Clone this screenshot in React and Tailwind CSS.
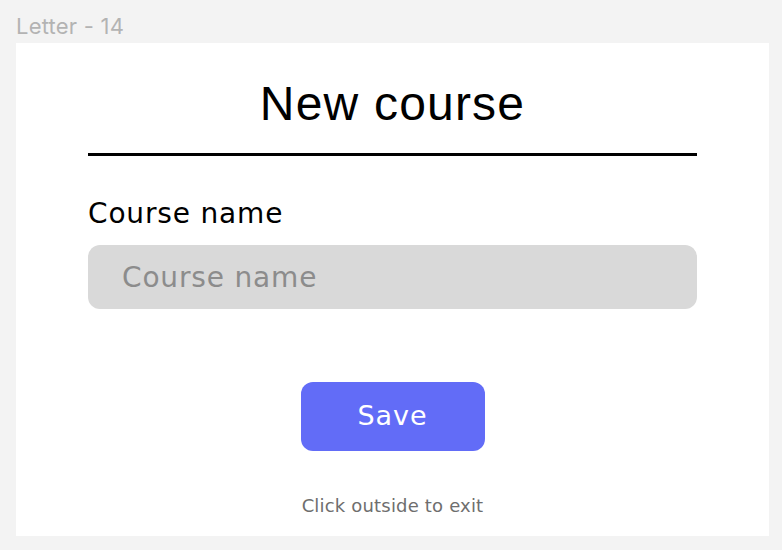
export default function App() {
  return (
    <div className="w-full h-[550px] bg-[#f3f3f3] pl-4 font-['Inter',sans-serif]">
      <p className="h-[43px] pt-[11px] text-[22px] leading-[30px] tracking-[0.01em] text-[#b3b3b3]">Letter - 14</p>

      <div className="w-[753px] h-[493px] bg-white px-[72px] pt-[32px] flex flex-col font-['DejaVu_Sans',sans-serif]">
        <h1 className="text-center text-[48px] leading-[58px] tracking-[0.025em] text-black font-['Liberation_Sans',sans-serif]">
          New course
        </h1>
        <div className="mt-[20px] h-[3px] bg-black" />

        <label className="mt-[42px] text-[28px] leading-[32px] tracking-[0.03em] text-black">Course name</label>
        <input
          placeholder="Course name"
          className="mt-[15px] h-[64px] w-full rounded-[12px] bg-[#d9d9d9] px-[34px] text-[28px] tracking-[0.03em] text-black placeholder:text-[#8c8c8c] outline-none"
        />

        <div className="mt-[73px] flex justify-center">
          <button className="w-[184px] h-[69px] rounded-[12px] bg-[#626cf7] text-white text-[27px] tracking-[0.035em]">
            Save
          </button>
        </div>

        <p className="mt-[43px] text-center text-[18px] leading-[24px] tracking-[0.01em] text-[#6e6e6e]">Click outside to exit</p>
      </div>
    </div>
  )
}
